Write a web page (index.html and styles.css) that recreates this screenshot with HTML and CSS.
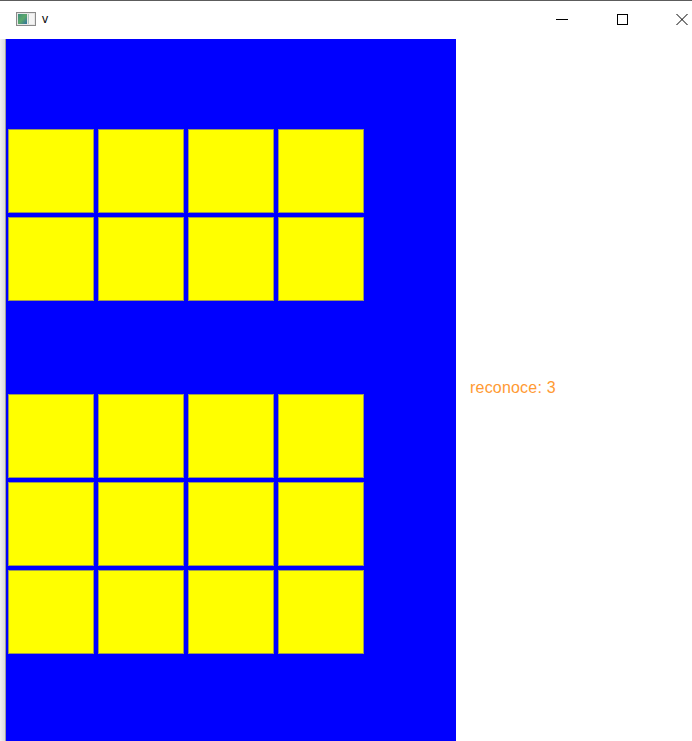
FILE: index.html
```html
<!DOCTYPE html>
<html>
<head>
<meta charset="utf-8">
<link rel="stylesheet" href="styles.css">
</head>
<body>
<div class="window">
  <div class="titlebar">
    <div class="title-left">
      <svg class="app-icon" width="20" height="14" viewBox="0 0 20 14">
        <defs>
          <linearGradient id="g" x1="0" y1="0" x2="1" y2="1">
            <stop offset="0" stop-color="#3f8f7f"/>
            <stop offset="0.5" stop-color="#5aa86a"/>
            <stop offset="1" stop-color="#2f6fa0"/>
          </linearGradient>
        </defs>
        <rect x="0.5" y="0.5" width="19" height="13" fill="#e6e6e6" stroke="#8a8a8a"/>
        <rect x="2" y="2" width="9" height="10" fill="url(#g)"/>
        <rect x="12" y="2" width="6" height="10" fill="#f4f4f4"/>
        <rect x="12" y="2" width="1" height="10" fill="#b0c8c0"/>
      </svg>
      <span class="title">v</span>
    </div>
    <div class="controls">
      <svg class="ctl" width="60" height="30" viewBox="0 0 60 30"><line x1="24" y1="16.5" x2="36" y2="16.5" stroke="#000" stroke-width="1"/></svg>
      <svg class="ctl" width="60" height="30" viewBox="0 0 60 30"><rect x="25.5" y="11.5" width="10" height="10" fill="none" stroke="#000" stroke-width="1"/></svg>
      <svg class="ctl last" width="40" height="30" viewBox="0 0 40 30"><path d="M24.5 11 L35.5 22 M35.5 11 L24.5 22" stroke="#000" stroke-width="1"/></svg>
    </div>
  </div>
  <div class="client">
    <div class="edge"></div>
    <div class="panel">
      <div class="grid">
        <div class="cell"></div><div class="cell"></div><div class="cell"></div><div class="cell"></div>
        <div class="cell"></div><div class="cell"></div><div class="cell"></div><div class="cell"></div>
      </div>
      <div class="grid second">
        <div class="cell"></div><div class="cell"></div><div class="cell"></div><div class="cell"></div>
        <div class="cell"></div><div class="cell"></div><div class="cell"></div><div class="cell"></div>
        <div class="cell"></div><div class="cell"></div><div class="cell"></div><div class="cell"></div>
      </div>
    </div>
    <div class="side">
      <span class="status">reconoce: 3</span>
    </div>
  </div>
</div>
</body>
</html>
```

FILE: styles.css
```css
html, body {
  margin: 0;
  padding: 0;
  background: #ffffff;
  overflow: hidden;
}
.window {
  width: 692px;
  height: 741px;
  display: flex;
  flex-direction: column;
  background: #ffffff;
}
.titlebar {
  height: 38px;
  border-top: 1px solid #5c5c5c;
  display: flex;
  align-items: flex-start;
  justify-content: space-between;
  background: #ffffff;
  font-family: "Noto Sans", "Liberation Sans", sans-serif;
}
.title-left {
  display: flex;
  align-items: center;
  padding-left: 16px;
  padding-top: 11px;
}
.app-icon {
  display: block;
}
.title {
  margin-left: 6px;
  font-size: 12px;
  color: #000;
  line-height: 14px;
}
.controls {
  display: flex;
  padding-top: 2px;
}
.ctl {
  display: block;
}
.client {
  flex: 1;
  display: flex;
}
.edge {
  width: 5px;
  background: linear-gradient(to right, #f2f2f2, #dcdcdc);
  border-right: 1px solid #a0a0a0;
}
.panel {
  width: 450px;
  background: #0000ff;
  padding: 90px 0 0 2px;
  box-sizing: border-box;
}
.grid {
  display: grid;
  grid-template-columns: repeat(4, 86px);
  grid-auto-rows: 84px;
  gap: 4px;
}
.grid.second {
  margin-top: 93px;
}
.cell {
  background: #ffff00;
  border: 1px solid #9a9a5a;
  box-sizing: border-box;
}
.side {
  flex: 1;
  padding: 340px 0 0 14px;
}
.status {
  font-family: "Liberation Sans", Arial, sans-serif;
  font-size: 16px;
  color: #ff9a33;
  line-height: 18px;
  letter-spacing: 0.2px;
}
```
